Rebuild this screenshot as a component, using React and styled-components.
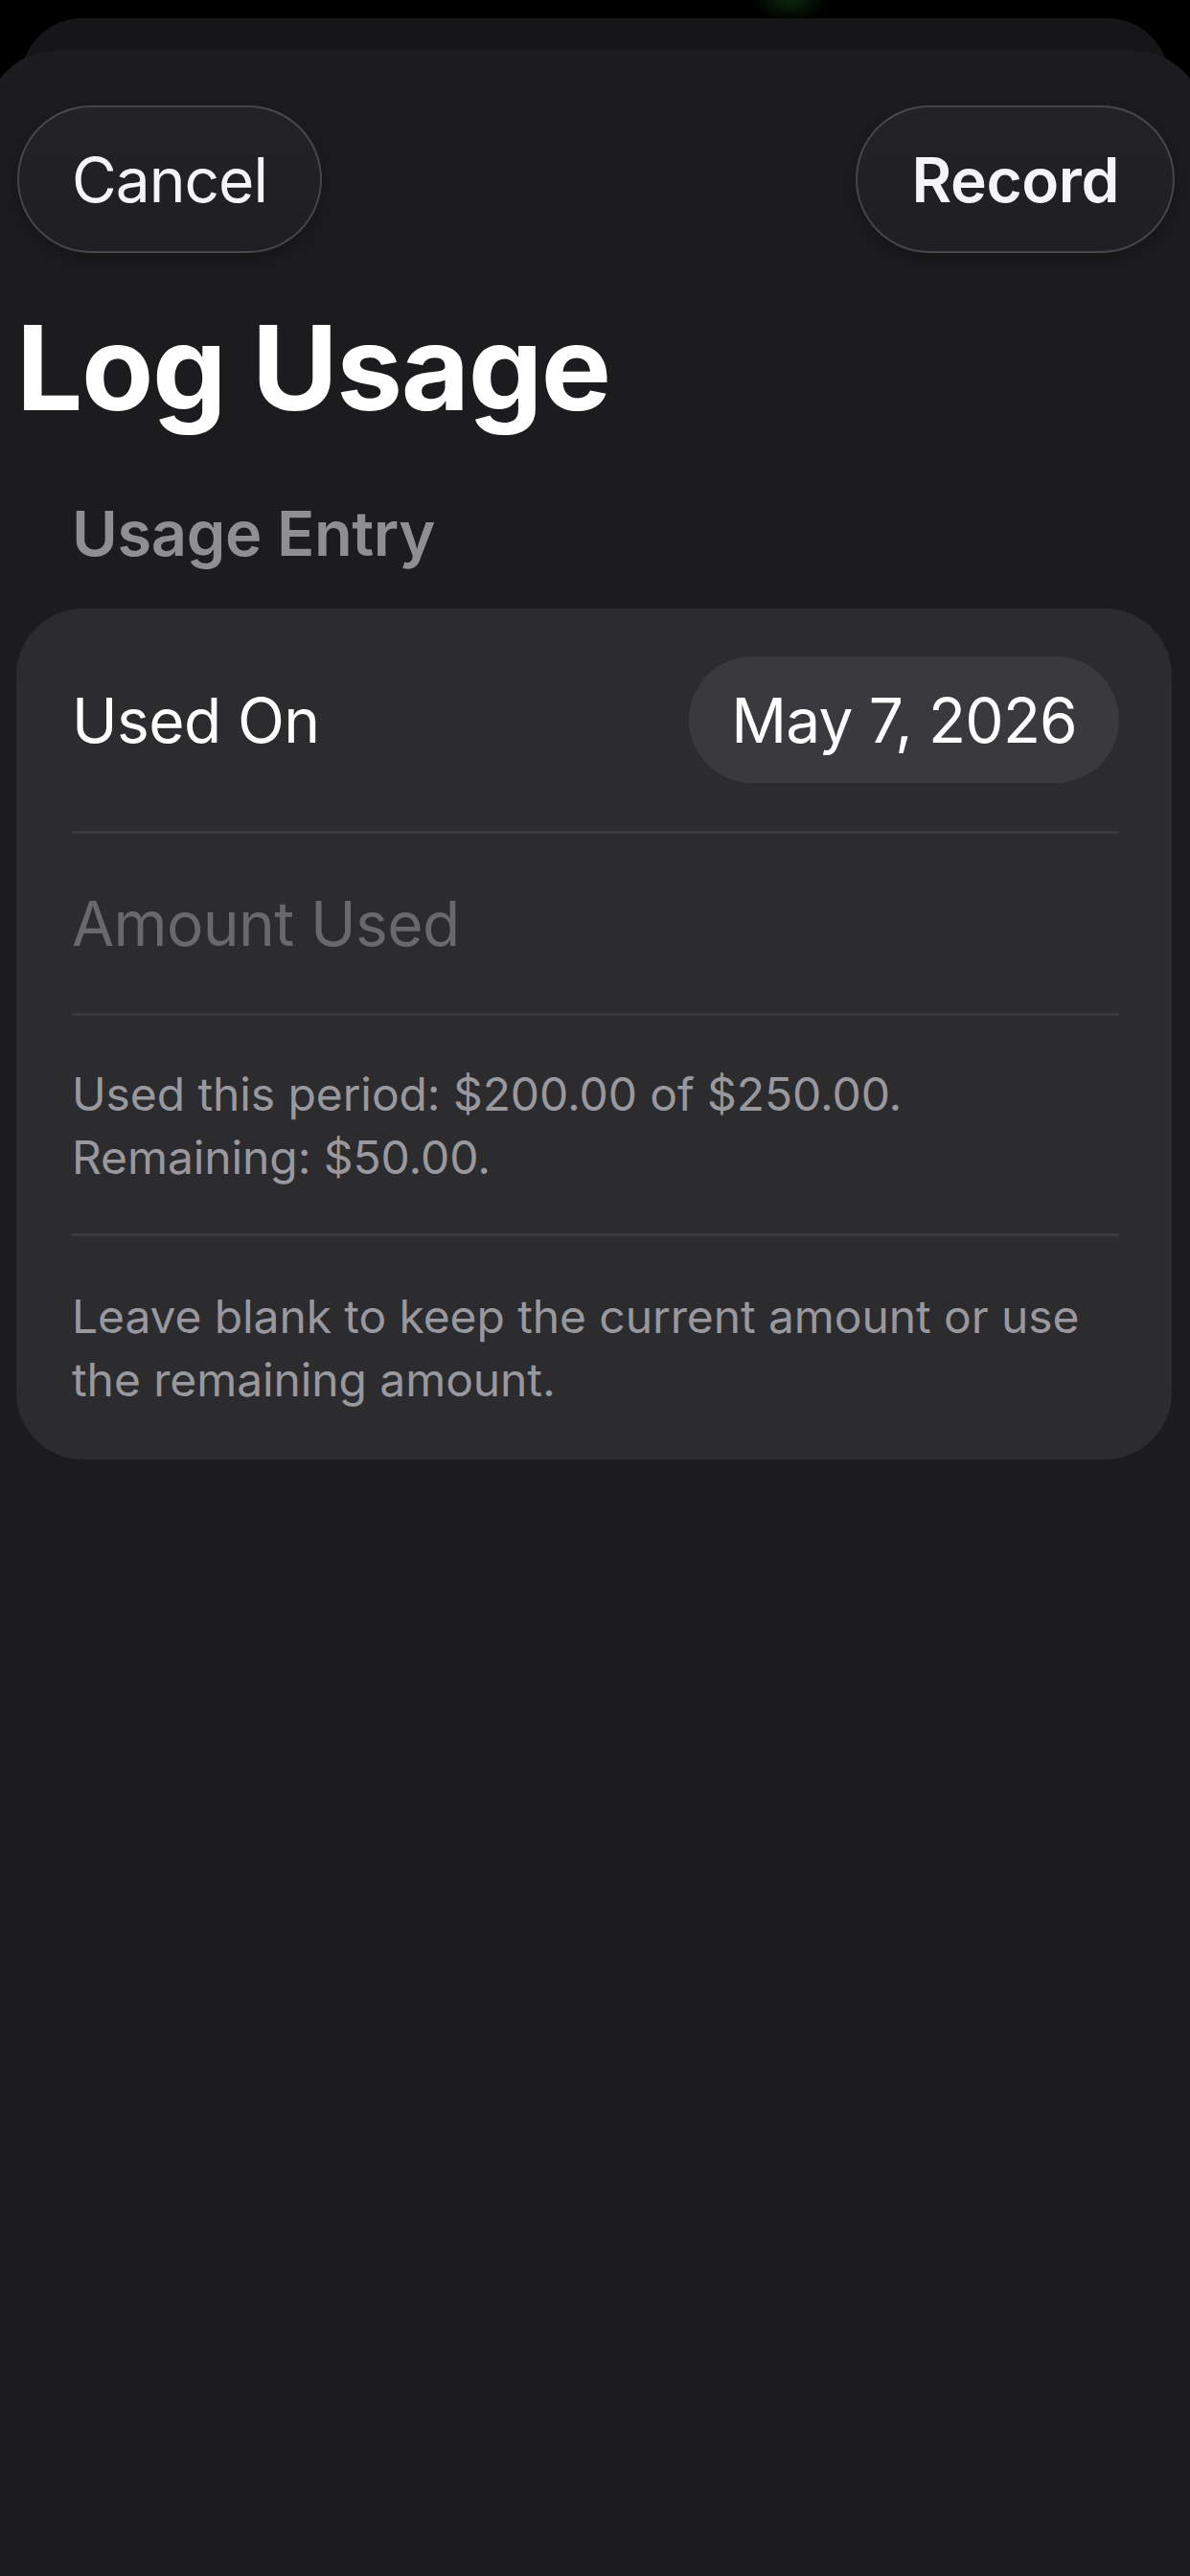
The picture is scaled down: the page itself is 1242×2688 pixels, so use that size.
import styled, { createGlobalStyle } from "styled-components"

const GlobalStyle = createGlobalStyle`
  html, body {
    margin: 0;
    padding: 0;
    background: #000;
  }

  body {
    font-family: "Inter", "Noto Sans", "Liberation Sans", sans-serif;
    color: #fff;
    -webkit-font-smoothing: antialiased;
  }
`

const Screen = styled.div`
  display: flex;
  flex-direction: column;
  min-height: 100vh;
  overflow: hidden;
  padding-top: 19px;
  background:
    radial-gradient(ellipse 40px 22px at 824px 0, rgba(20, 70, 20, 0.55), transparent 100%),
    #000;
`

const BackSheet = styled.div`
  height: 80px;
  margin: 0 22px -46px;
  border-radius: 64px 64px 0 0;
  background: #161618;
`

const Sheet = styled.main`
  flex: 1;
  margin: 0 -14px;
  padding: 0 14px 80px;
  border-radius: 72px 72px 0 0;
  background: #1c1c1e;
`

const NavBar = styled.nav`
  display: flex;
  align-items: center;
  justify-content: space-between;
  padding: 57px 16px 0 18px;
`

const PillButton = styled.button`
  height: 154px;
  padding: 0 ${({ $bold }) => ($bold ? "56px" : "55px")};
  border-radius: 77px;
  border: 2px solid rgba(255, 255, 255, 0.17);
  background: linear-gradient(180deg, #232326 0%, #1f1f22 100%);
  box-shadow: 0 6px 18px rgba(0, 0, 0, 0.25);
  color: #f5f5f7;
  font-family: inherit;
  font-size: 64px;
  font-weight: ${({ $bold }) => ($bold ? 600 : 400)};
  letter-spacing: ${({ $bold }) => ($bold ? "-0.4px" : "-1px")};
  cursor: pointer;
`

const Title = styled.h1`
  margin: 48px 0 0;
  padding-left: 17px;
  font-size: 123px;
  line-height: 144px;
  font-weight: 700;
  letter-spacing: -1.5px;
`

const SectionHeader = styled.h2`
  margin: 62px 0 0;
  padding-left: 75px;
  font-size: 65px;
  line-height: 77px;
  font-weight: 600;
  letter-spacing: -0.4px;
  color: #8e8e93;
`

const Card = styled.section`
  margin: 40px 19px 0 17px;
  padding: 0 55px 0 58px;
  border-radius: 70px;
  background: #2c2c2e;
`

const Row = styled.div`
  display: flex;
  align-items: center;
  justify-content: space-between;
  min-height: ${({ $height }) => $height}px;
  border-bottom: ${({ $last }) => ($last ? "none" : "3px solid #3a3a3c")};
`

const Label = styled.span`
  font-size: 64px;
  letter-spacing: -0.6px;
  color: #fff;
`

const DatePill = styled.button`
  height: 132px;
  padding: 0 44px;
  border: none;
  border-radius: 66px;
  background: #3a3a3e;
  color: #fff;
  font-family: inherit;
  font-size: 64px;
  letter-spacing: -0.8px;
`

const AmountInput = styled.input`
  flex: 1;
  padding: 0;
  border: none;
  background: transparent;
  color: #fff;
  font-family: inherit;
  font-size: 64px;
  letter-spacing: -0.6px;

  &::placeholder {
    color: #68686d;
  }

  &:focus {
    outline: none;
  }
`

const Note = styled.p`
  margin: 0;
  padding: ${({ $pad }) => $pad};
  font-size: 48px;
  line-height: 66px;
  letter-spacing: -0.1px;
  color: #98989e;
  border-bottom: ${({ $last }) => ($last ? "none" : "3px solid #3a3a3c")};
`

export default function App() {
  return (
    <>
      <GlobalStyle />
      <Screen>
        <BackSheet />
        <Sheet>
          <NavBar>
            <PillButton>Cancel</PillButton>
            <PillButton $bold>Record</PillButton>
          </NavBar>

          <Title>Log Usage</Title>
          <SectionHeader>Usage Entry</SectionHeader>

          <Card>
            <Row $height={232}>
              <Label>Used On</Label>
              <DatePill>May 7, 2026</DatePill>
            </Row>
            <Row $height={187}>
              <AmountInput type="text" placeholder="Amount Used" />
            </Row>
            <Note $pad="49px 0 46px">
              Used this period: $200.00 of $250.00.
              <br />
              Remaining: $50.00.
            </Note>
            <Note $pad="51px 0 50px" $last>
              Leave blank to keep the current amount or use the remaining amount.
            </Note>
          </Card>
        </Sheet>
      </Screen>
    </>
  )
}
